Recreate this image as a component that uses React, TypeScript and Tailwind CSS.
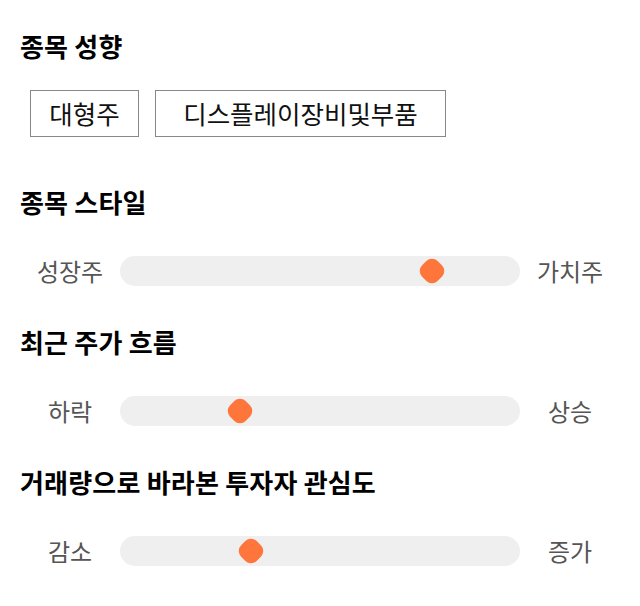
import React from 'react';

const FONT = "font-['Noto_Sans_CJK_KR','Noto_Sans',sans-serif]";

const SLIDERS = [
  { title: '종목 스타일', left: '성장주', right: '가치주', value: 0.78 },
  { title: '최근 주가 흐름', left: '하락', right: '상승', value: 0.3 },
  { title: '거래량으로 바라본 투자자 관심도', left: '감소', right: '증가', value: 0.328 },
];

const TAGS = [
  { label: '대형주', w: 'w-[109px]' },
  { label: '디스플레이장비및부품', w: 'w-[291px]' },
];

const Slider: React.FC<{ left: string; right: string; value: number }> = ({ left, right, value }) => (
  <div className="flex items-center h-[30px]">
    <div className="w-[100px] text-center text-[24px] leading-[30px] text-[#555]">{left}</div>
    <div className="relative flex-1 h-[30px] rounded-full bg-[#efefef]">
      <div
        className="absolute top-1/2 w-[22px] h-[22px] -translate-x-1/2 -translate-y-1/2 rotate-45 rounded-[8px] bg-[#ff763d]"
        style={{ left: `${value * 100}%` }}
      />
    </div>
    <div className="w-[100px] text-center text-[24px] leading-[30px] text-[#555]">{right}</div>
  </div>
);

export default function App() {
  return (
    <div className={`${FONT} w-[640px] h-[606px] bg-white px-5 pt-[30px]`}>
      <h2 className="text-[26px] font-bold leading-[32px] tracking-[0.2px] text-black">종목 성향</h2>
      <div className="flex gap-4 ml-[10px] mt-[28px]">
        {TAGS.map(t => (
          <div
            key={t.label}
            className={`${t.w} h-[47px] flex items-center justify-center border border-[#888] text-[25.5px] text-[#111]`}
          >
            {t.label}
          </div>
        ))}
      </div>

      {SLIDERS.map((s, i) => (
        <div key={s.title} className={i === 0 ? 'mt-[49px]' : 'mt-[40px]'}>
          <h2 className="text-[26px] font-bold leading-[32px] tracking-[0.2px] text-black">{s.title}</h2>
          <div className="mt-[38px]">
            <Slider left={s.left} right={s.right} value={s.value} />
          </div>
        </div>
      ))}
    </div>
  );
}
